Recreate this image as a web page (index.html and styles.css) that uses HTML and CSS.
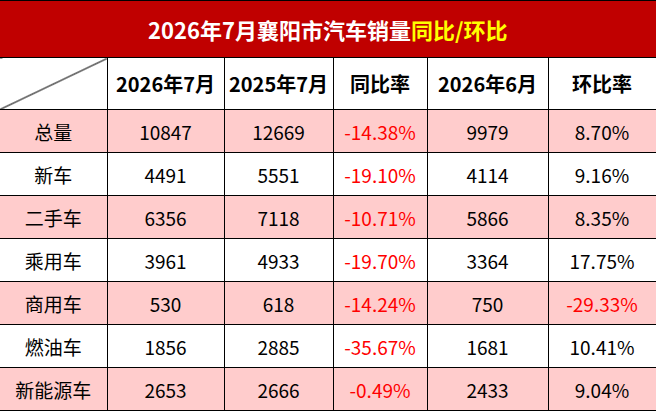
FILE: index.html
```html
<!DOCTYPE html>
<html lang="zh-CN">
<head>
<meta charset="utf-8">
<title>2026年7月襄阳市汽车销量同比/环比</title>
<link rel="stylesheet" href="styles.css">
</head>
<body>
<table class="sales">
  <colgroup>
    <col class="c1"><col class="c2"><col class="c3"><col class="c4"><col class="c5"><col class="c6">
  </colgroup>
  <thead>
    <tr class="title-row">
      <th colspan="6" class="title">2026年7月襄阳市汽车销量<span class="hl">同比/环比</span></th>
    </tr>
    <tr class="head-row">
      <th class="diag"></th>
      <th>2026年7月</th>
      <th>2025年7月</th>
      <th>同比率</th>
      <th>2026年6月</th>
      <th>环比率</th>
    </tr>
  </thead>
  <tbody>
    <tr class="pink"><td>总量</td><td>10847</td><td>12669</td><td class="neg">-14.38%</td><td>9979</td><td>8.70%</td></tr>
    <tr><td>新车</td><td>4491</td><td>5551</td><td class="neg">-19.10%</td><td>4114</td><td>9.16%</td></tr>
    <tr class="pink"><td>二手车</td><td>6356</td><td>7118</td><td class="neg">-10.71%</td><td>5866</td><td>8.35%</td></tr>
    <tr><td>乘用车</td><td>3961</td><td>4933</td><td class="neg">-19.70%</td><td>3364</td><td>17.75%</td></tr>
    <tr class="pink"><td>商用车</td><td>530</td><td>618</td><td class="neg">-14.24%</td><td>750</td><td class="neg">-29.33%</td></tr>
    <tr><td>燃油车</td><td>1856</td><td>2885</td><td class="neg">-35.67%</td><td>1681</td><td>10.41%</td></tr>
    <tr class="pink"><td>新能源车</td><td>2653</td><td>2666</td><td class="neg">-0.49%</td><td>2433</td><td>9.04%</td></tr>
  </tbody>
</table>
</body>
</html>
```

FILE: styles.css
```css
html, body {
  margin: 0;
  padding: 0;
  background: #ffffff;
}

.sales {
  border-collapse: collapse;
  table-layout: fixed;
  width: 656px;
  font-family: "Noto Sans CJK SC", "Noto Sans", sans-serif;
  color: #000;
}

.c1 { width: 107px; }
.c2 { width: 117px; }
.c3 { width: 109px; }
.c4 { width: 94px; }
.c5 { width: 121px; }
.c6 { width: 108px; }

.sales th,
.sales td {
  border: 1px solid #000;
  padding: 0;
  text-align: center;
  vertical-align: middle;
}

.sales tr > :first-child {
  border-left: none;
}

.title {
  height: 56px;
  background: #c00000;
  color: #ffffff;
  font-size: 22px;
  font-weight: 700;
  line-height: 1;
}

.hl {
  color: #ffff00;
}

.head-row th {
  height: 51px;
  font-size: 20px;
  font-weight: 700;
  line-height: 1;
  background: #ffffff;
}

.head-row th.diag {
  background: linear-gradient(to bottom right, transparent calc(50% - 1px), #000 50%, transparent calc(50% + 1px));
}

.sales td {
  height: 42px;
  font-size: 19px;
  font-weight: 400;
  line-height: 1;
  background: #ffffff;
}

.pink td {
  background: #ffcccc;
}

.sales td.neg {
  color: #ff0000;
}
```
